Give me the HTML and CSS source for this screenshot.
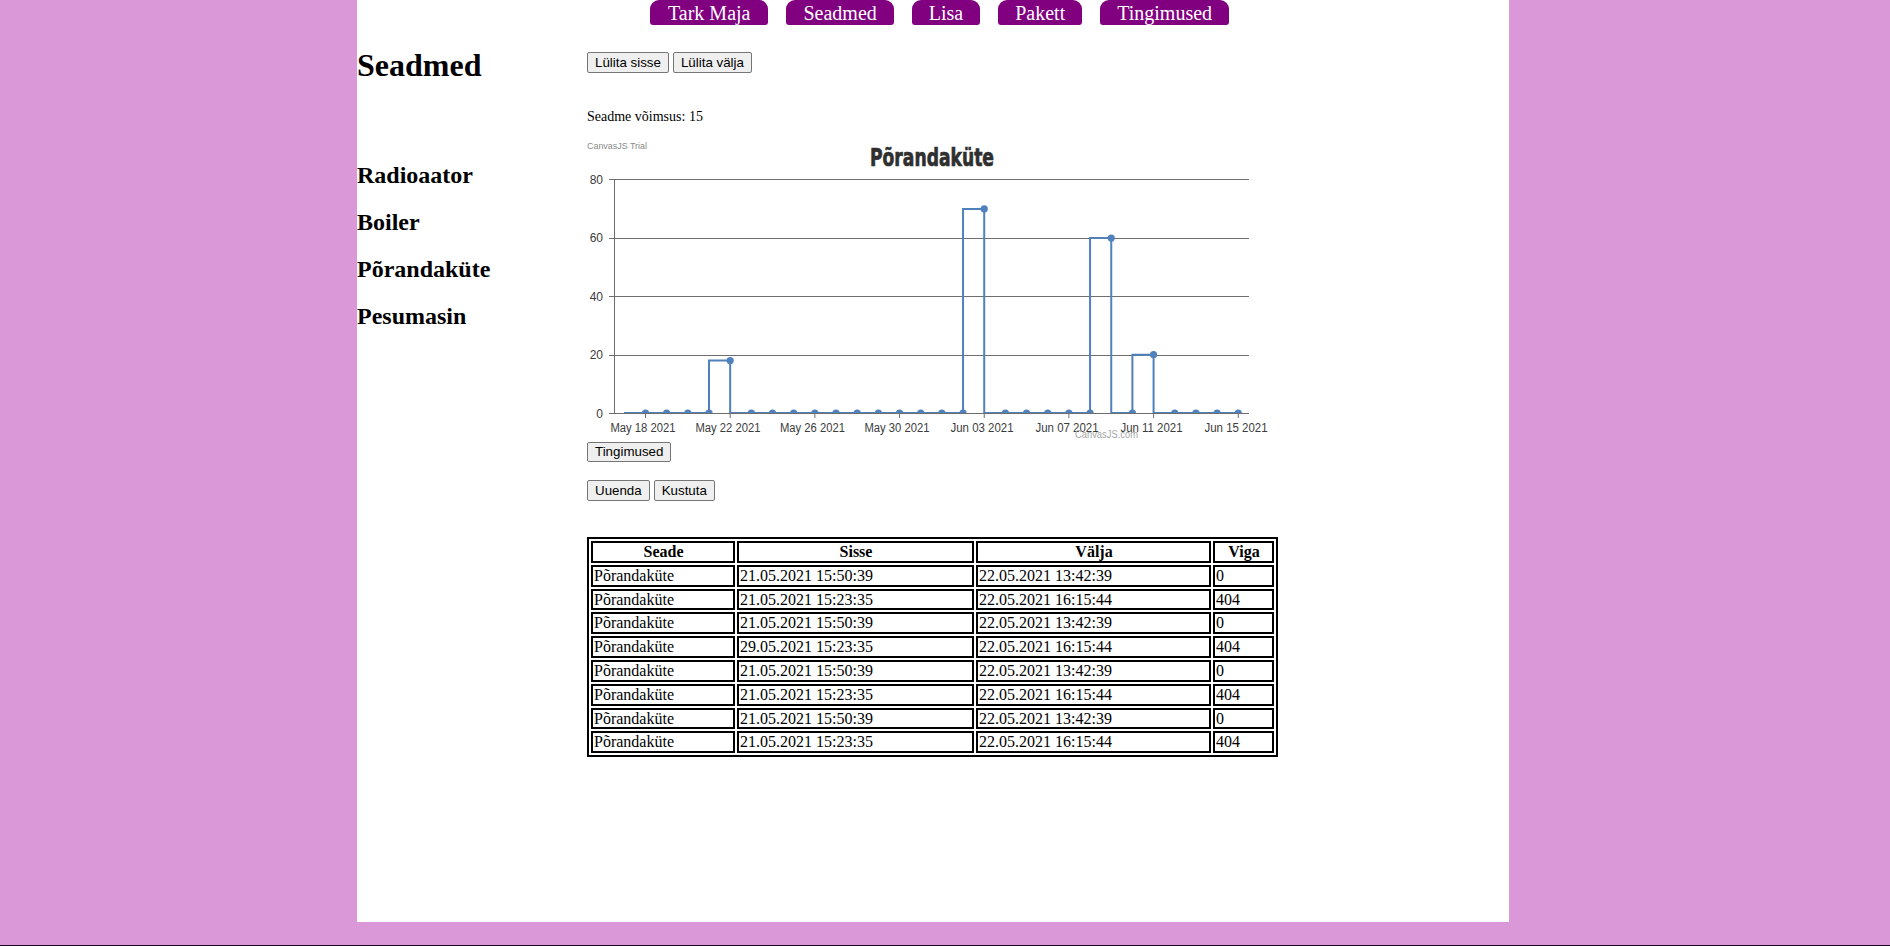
FILE: index.html
```html
<!DOCTYPE html>
<html lang="et">
<head>
<meta charset="utf-8">
<title>Seadmed</title>
<link rel="stylesheet" href="styles.css">
</head>
<body>
<div class="page">
  <nav class="nav">
    <a class="nav-btn nav-first">Tark Maja</a>
    <a class="nav-btn">Seadmed</a>
    <a class="nav-btn">Lisa</a>
    <a class="nav-btn">Pakett</a>
    <a class="nav-btn">Tingimused</a>
  </nav>
  <div class="layout">
    <aside class="side">
      <h1 class="side-title">Seadmed</h1>
      <ul class="dev-list">
        <li>Radioaator</li>
        <li>Boiler</li>
        <li>Põrandaküte</li>
        <li>Pesumasin</li>
      </ul>
    </aside>
    <main class="main">
      <div class="btn-row top-btns">
        <button class="btn">Lülita sisse</button>
        <button class="btn">Lülita välja</button>
      </div>
      <p class="power">Seadme võimsus: 15</p>
      <div class="chart">
        <svg width="691" height="304" viewBox="0 0 691 304" xmlns="http://www.w3.org/2000/svg">
          <defs>
            <clipPath id="plot"><rect x="27" y="0" width="640" height="275.5"/></clipPath>
          </defs>
          <text x="0" y="11" class="trial" textLength="60" lengthAdjust="spacingAndGlyphs">CanvasJS Trial</text>
          <text x="345" y="28" class="title" text-anchor="middle" textLength="124" lengthAdjust="spacingAndGlyphs">Põrandaküte</text>
          <g class="grid">
            <line x1="22" y1="41.5" x2="662" y2="41.5"/>
            <line x1="22" y1="100.5" x2="662" y2="100.5"/>
            <line x1="22" y1="158.5" x2="662" y2="158.5"/>
            <line x1="22" y1="217.5" x2="662" y2="217.5"/>
            <line x1="27.5" y1="41" x2="27.5" y2="276"/>
          </g>
          <g class="ylab">
            <text x="16" y="45.5" text-anchor="end">80</text>
            <text x="16" y="104" text-anchor="end">60</text>
            <text x="16" y="162.5" text-anchor="end">40</text>
            <text x="16" y="221" text-anchor="end">20</text>
            <text x="16" y="279.5" text-anchor="end">0</text>
          </g>
          <g clip-path="url(#plot)">
            <path class="series" d="M37,275 H122.01 V222.53 H143.18 V275 H376.05 V70.95 H397.22 V275 H503.07 V100.1 H524.24 V275 H545.41 V216.7 H566.58 V275 H651.26"/>
            <g class="marks">
              <circle cx="58.5" cy="275" r="3.6"/><circle cx="79.67" cy="275" r="3.6"/><circle cx="100.84" cy="275" r="3.6"/><circle cx="122.01" cy="275" r="3.6"/>
              <circle cx="143.18" cy="222.53" r="3.6"/><circle cx="164.35" cy="275" r="3.6"/><circle cx="185.52" cy="275" r="3.6"/><circle cx="206.69" cy="275" r="3.6"/>
              <circle cx="227.86" cy="275" r="3.6"/><circle cx="249.03" cy="275" r="3.6"/><circle cx="270.2" cy="275" r="3.6"/><circle cx="291.37" cy="275" r="3.6"/>
              <circle cx="312.54" cy="275" r="3.6"/><circle cx="333.71" cy="275" r="3.6"/><circle cx="354.88" cy="275" r="3.6"/><circle cx="376.05" cy="275" r="3.6"/>
              <circle cx="397.22" cy="70.95" r="3.6"/><circle cx="418.39" cy="275" r="3.6"/><circle cx="439.56" cy="275" r="3.6"/><circle cx="460.73" cy="275" r="3.6"/>
              <circle cx="481.9" cy="275" r="3.6"/><circle cx="503.07" cy="275" r="3.6"/><circle cx="524.24" cy="100.1" r="3.6"/><circle cx="545.41" cy="275" r="3.6"/>
              <circle cx="566.58" cy="216.7" r="3.6"/><circle cx="587.75" cy="275" r="3.6"/><circle cx="608.92" cy="275" r="3.6"/><circle cx="630.09" cy="275" r="3.6"/>
              <circle cx="651.26" cy="275" r="3.6"/>
            </g>
          </g>
          <g class="grid">
            <line x1="22" y1="275.5" x2="662" y2="275.5"/>
            <line x1="58.5" y1="275" x2="58.5" y2="280"/>
            <line x1="143.18" y1="275" x2="143.18" y2="280"/>
            <line x1="227.86" y1="275" x2="227.86" y2="280"/>
            <line x1="312.54" y1="275" x2="312.54" y2="280"/>
            <line x1="397.22" y1="275" x2="397.22" y2="280"/>
            <line x1="481.9" y1="275" x2="481.9" y2="280"/>
            <line x1="566.58" y1="275" x2="566.58" y2="280"/>
            <line x1="651.26" y1="275" x2="651.26" y2="280"/>
          </g>
          <g class="xlab" text-anchor="middle">
            <text x="56" y="294" textLength="65" lengthAdjust="spacingAndGlyphs">May 18 2021</text>
            <text x="141" y="294" textLength="65" lengthAdjust="spacingAndGlyphs">May 22 2021</text>
            <text x="225.5" y="294" textLength="65" lengthAdjust="spacingAndGlyphs">May 26 2021</text>
            <text x="310" y="294" textLength="65" lengthAdjust="spacingAndGlyphs">May 30 2021</text>
            <text x="395" y="294" textLength="63" lengthAdjust="spacingAndGlyphs">Jun 03 2021</text>
            <text x="480" y="294" textLength="63" lengthAdjust="spacingAndGlyphs">Jun 07 2021</text>
            <text x="564.5" y="294" textLength="62" lengthAdjust="spacingAndGlyphs">Jun 11 2021</text>
            <text x="649" y="294" textLength="63" lengthAdjust="spacingAndGlyphs">Jun 15 2021</text>
          </g>
          <text x="488" y="300" class="wm" textLength="63" lengthAdjust="spacingAndGlyphs">CanvasJS.com</text>
        </svg>
      </div>
      <div class="btn-row cond-row">
        <button class="btn">Tingimused</button>
      </div>
      <div class="btn-row edit-row">
        <button class="btn">Uuenda</button>
        <button class="btn">Kustuta</button>
      </div>
      <table class="log">
        <colgroup>
          <col class="c1"><col class="c2"><col class="c3"><col class="c4">
        </colgroup>
        <thead>
          <tr><th>Seade</th><th>Sisse</th><th>Välja</th><th>Viga</th></tr>
        </thead>
        <tbody>
          <tr><td>Põrandaküte</td><td>21.05.2021 15:50:39</td><td>22.05.2021 13:42:39</td><td>0</td></tr>
          <tr><td>Põrandaküte</td><td>21.05.2021 15:23:35</td><td>22.05.2021 16:15:44</td><td>404</td></tr>
          <tr><td>Põrandaküte</td><td>21.05.2021 15:50:39</td><td>22.05.2021 13:42:39</td><td>0</td></tr>
          <tr><td>Põrandaküte</td><td>29.05.2021 15:23:35</td><td>22.05.2021 16:15:44</td><td>404</td></tr>
          <tr><td>Põrandaküte</td><td>21.05.2021 15:50:39</td><td>22.05.2021 13:42:39</td><td>0</td></tr>
          <tr><td>Põrandaküte</td><td>21.05.2021 15:23:35</td><td>22.05.2021 16:15:44</td><td>404</td></tr>
          <tr><td>Põrandaküte</td><td>21.05.2021 15:50:39</td><td>22.05.2021 13:42:39</td><td>0</td></tr>
          <tr><td>Põrandaküte</td><td>21.05.2021 15:23:35</td><td>22.05.2021 16:15:44</td><td>404</td></tr>
        </tbody>
      </table>
    </main>
  </div>
</div>
<div class="bottom-line"></div>
</body>
</html>
```

FILE: styles.css
```css
html, body {
  margin: 0;
  padding: 0;
}
body {
  background: #da98d8;
  font-family: "Liberation Serif", "Times New Roman", serif;
  color: #000;
  height: 946px;
  overflow: hidden;
}
.page {
  width: 1152px;
  height: 922px;
  margin-left: 357px;
  background: #fff;
  overflow: hidden;
}
.nav {
  display: flex;
  gap: 18px;
  height: 25px;
  padding-left: 293px;
}
.nav-btn {
  display: block;
  height: 25px;
  box-sizing: border-box;
  padding: 2px 17px 0;
  line-height: 23px;
  font-size: 20px;
  color: #fff;
  background: #800080;
  border-radius: 9px 9px 3px 3px;
}
.nav-btn.nav-first {
  padding-left: 18px;
  padding-right: 18px;
}
.layout {
  display: flex;
}
.side {
  width: 230px;
  flex: none;
}
.side-title {
  margin: 22px 0 0;
  font-size: 32px;
  font-weight: bold;
  line-height: 37px;
}
.dev-list {
  list-style: none;
  margin: 78px 0 0;
  padding: 0;
}
.dev-list li {
  font-size: 24px;
  font-weight: bold;
  line-height: 27px;
  margin-bottom: 20px;
}
.main {
  flex: 1;
}
.btn-row {
  display: flex;
  gap: 4px;
}
.top-btns {
  margin-top: 27px;
}
.btn {
  font-family: "Liberation Sans", Arial, sans-serif;
  font-size: 13.333px;
  line-height: 15px;
  padding: 2px 7px;
  border: 1px solid #767676;
  border-radius: 2px;
  background: #efefef;
  color: #000;
  margin: 0;
}
.cond-row .btn {
  padding: 1px 7px 2px;
}
.power {
  margin: 36px 0 0;
  font-size: 14px;
  line-height: 16px;
}
.chart {
  margin-top: 13px;
  height: 304px;
}
.chart svg {
  display: block;
}
.trial {
  font-family: "Liberation Sans", Arial, sans-serif;
  font-size: 9.5px;
  fill: #8a8a8a;
}
.title {
  font-family: "DejaVu Sans Condensed", "DejaVu Sans", sans-serif;
  font-stretch: condensed;
  font-weight: bold;
  font-size: 25px;
  fill: #2f2f2f;
  stroke: #2f2f2f;
  stroke-width: 0.7px;
}
.grid line {
  stroke: #6e6e6e;
  stroke-width: 1;
}
.ylab text, .xlab text {
  font-family: "Liberation Sans", Arial, sans-serif;
  font-size: 12px;
  fill: #3c3c3c;
}
.series {
  fill: none;
  stroke: #4f81bc;
  stroke-width: 2;
}
.marks circle {
  fill: #4f81bc;
}
.wm {
  font-family: "Liberation Sans", Arial, sans-serif;
  font-size: 10.5px;
  fill: #a5a5a5;
}
.cond-row {
  margin-top: 0;
}
.edit-row {
  margin-top: 18px;
}
.log {
  margin-top: 36px;
  border: 2px solid #000;
  border-spacing: 2px;
  border-collapse: separate;
  table-layout: fixed;
  width: 691px;
  font-size: 16px;
}
.log .c1 { width: 144px; }
.log .c2 { width: 237px; }
.log .c3 { width: 235px; }
.log .c4 { width: 61px; }
.log th, .log td {
  border: 2px solid #000;
  padding: 0 0 0 1px;
  line-height: 17.8px;
  white-space: nowrap;
}
.log th {
  text-align: center;
  font-weight: bold;
}
.log td {
  text-align: left;
}
.bottom-line {
  margin-top: 23px;
  height: 1px;
  background: #160a16;
}
```
